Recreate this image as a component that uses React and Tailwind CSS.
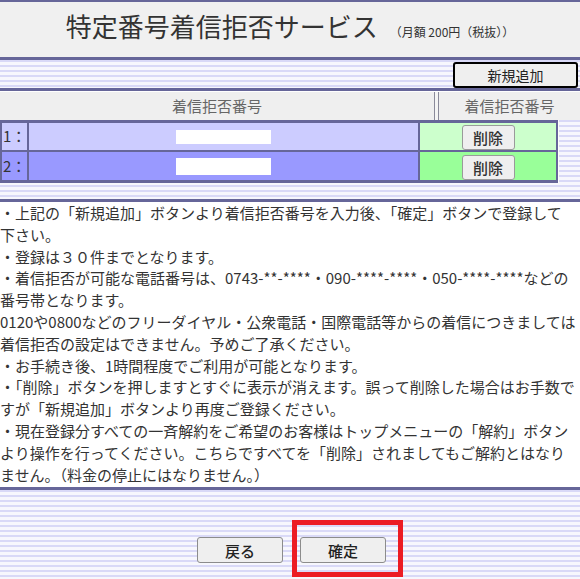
import React from "react";

const font = "font-['Noto_Sans_CJK_JP','Noto_Sans',sans-serif]";

const notes = [
  "・上記の「新規追加」ボタンより着信拒否番号を入力後、「確定」ボタンで登録して",
  "下さい。",
  "・登録は３０件までとなります。",
  "・着信拒否が可能な電話番号は、0743-**-****・090-****-****・050-****-****などの",
  "番号帯となります。",
  "0120や0800などのフリーダイヤル・公衆電話・国際電話等からの着信につきましては",
  "着信拒否の設定はできません。予めご了承ください。",
  "・お手続き後、1時間程度でご利用が可能となります。",
  "・「削除」ボタンを押しますとすぐに表示が消えます。誤って削除した場合はお手数で",
  "すが「新規追加」ボタンより再度ご登録ください。",
  "・現在登録分すべての一斉解約をご希望のお客様はトップメニューの「解約」ボタン",
  "より操作を行ってください。こちらですべてを「削除」されましてもご解約とはなり",
  "ません。（料金の停止にはなりません。）",
];

const rows = [
  { no: "1：", bg: "bg-[#ccccff]", green: "bg-[#ccffcc]", box: "h-[14px]" },
  { no: "2：", bg: "bg-[#9999ff]", green: "bg-[#99ff99]", box: "h-[17px]" },
];

const Line = () => <div className="h-[3px] bg-[#666699]" />;

export default function App() {
  return (
    <div
      className={`w-[580px] h-[579px] overflow-hidden flex flex-col text-[#333] ${font} bg-[repeating-linear-gradient(180deg,#d9d9f7_0px,#d9d9f7_2.5px,#f7f7fd_2.5px,#f7f7fd_5px)]`}
    >
      <div className="h-[2px] bg-[#666699]" />

      {/* title */}
      <div className="h-[55px] bg-[#f0f0f0] flex items-baseline justify-center gap-[12px] pt-[7px]">
        <h1 className="text-[26px] leading-[34px] font-normal">特定番号着信拒否サービス</h1>
        <span className="text-[12px]">（月額 200円（税抜））</span>
      </div>
      <Line />

      {/* add button */}
      <div className="h-[28px] flex justify-end pt-[2px] pr-[2px]">
        <button className="w-[125px] h-[26px] border-2 border-black rounded-[3px] bg-[#efefef] text-[14px] leading-none text-[#222]">
          新規追加
        </button>
      </div>
      <Line />

      {/* column headings */}
      <div className="h-[29px] flex bg-[#f4f4f4] border-t border-white">
        <div className="w-[435px] flex items-center justify-center bg-[#efefef] border-r border-[#8a8a9a] text-[15px] text-[#666]">
          着信拒否番号
        </div>
        <div className="w-[3px]" />
        <div className="flex-1 flex items-center justify-center bg-[#efefef] border-l border-[#8a8a9a] text-[15px] text-[#666]">
          着信拒否番号
        </div>
      </div>

      {/* numbers table */}
      <div className="flex">
        <div className="w-[558px] bg-[#666699] p-[2px] pt-[3px] pb-[3px] flex flex-col gap-[2px]">
          {rows.map((r, i) => (
            <div key={r.no} className={`flex gap-[2px] ${i === 0 ? "h-[27px]" : "h-[28px]"}`}>
              <div className={`w-[25px] ${r.bg} flex items-center pl-[1px] text-[15px] text-[#333]`}>
                {r.no}
              </div>
              <div className={`flex-1 ${r.bg} flex items-center justify-center`}>
                <div className={`w-[95px] ${r.box} bg-white`} />
              </div>
              <div className={`w-[136px] ${r.green} flex items-end justify-center`}>
                <button className="w-[53px] h-[25px] border border-[#9a9a9a] rounded-[3px] bg-[#efefef] text-[15px] leading-none font-medium text-[#333]">
                  削除
                </button>
              </div>
            </div>
          ))}
        </div>
        <div className="flex-1 border-l border-white" />
      </div>

      <div className="h-[16px]" />
      <Line />

      {/* notes */}
      <div className="h-[285px] bg-white pt-[0px] text-[15px] leading-[21.8px] text-[#333]">
        {notes.map((n, i) => (
          <div key={i} className="whitespace-nowrap">
            {n}
          </div>
        ))}
      </div>
      <Line />

      {/* footer buttons */}
      <div className="flex justify-center gap-[17px] pt-[47px] pl-[3px]">
        <button className="w-[86px] h-[26px] border border-[#8c8c8c] rounded-[3px] bg-[#efefef] text-[15px] leading-none font-medium text-[#222]">
          戻る
        </button>
        <div className="relative">
          <button className="w-[86px] h-[26px] border border-[#8c8c8c] rounded-[3px] bg-[#efefef] text-[15px] leading-none font-medium text-[#222]">
            確定
          </button>
          <span className="absolute left-[-8px] top-[-17px] w-[111px] h-[57px] border-[5px] border-[#ec1c24] pointer-events-none" />
        </div>
      </div>
    </div>
  );
}
